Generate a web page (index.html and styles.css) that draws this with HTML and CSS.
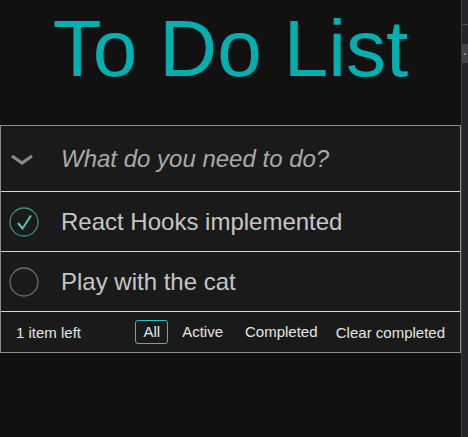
FILE: index.html
```html
<!DOCTYPE html>
<html>
<head>
<meta charset="utf-8">
<link rel="stylesheet" href="styles.css">
</head>
<body>
<div class="page">
  <main class="app">
    <h1 class="title">To Do List</h1>
    <section class="todo-box">
      <div class="row new-row">
        <span class="toggle-all">
          <svg width="24" height="14" viewBox="0 0 24 14"><polyline points="2,3 12,10 22,3" fill="none" stroke="#8a8a8a" stroke-width="3.2"/></svg>
        </span>
        <span class="placeholder">What do you need to do?</span>
      </div>
      <div class="row item">
        <span class="check">
          <svg width="32" height="32" viewBox="0 0 32 32"><circle cx="15" cy="15" r="14" fill="none" stroke="#3d8f80" stroke-width="1.3"/><polyline points="9,16 13.5,21.5 22,8.5" fill="none" stroke="#5cc0ad" stroke-width="2"/></svg>
        </span>
        <span class="label">React Hooks implemented</span>
      </div>
      <div class="row item">
        <span class="check">
          <svg width="32" height="32" viewBox="0 0 32 32"><circle cx="15" cy="15" r="14" fill="none" stroke="#6e6e6e" stroke-width="1.3"/></svg>
        </span>
        <span class="label">Play with the cat</span>
      </div>
      <footer class="footer">
        <span class="count">1 item left</span>
        <nav class="filters">
          <a class="filter selected">All</a>
          <a class="filter">Active</a>
          <a class="filter">Completed</a>
        </nav>
        <a class="clear">Clear completed</a>
      </footer>
    </section>
  </main>
  <aside class="strip">
    <div class="strip-top"></div>
    <div class="strip-handle"><span class="dot"></span></div>
  </aside>
</div>
</body>
</html>
```
FILE: styles.css
```css
html, body {
  margin: 0;
  padding: 0;
  background: #111111;
  height: 100%;
}
body {
  font-family: "Liberation Sans", Arial, sans-serif;
  overflow: hidden;
}
.page {
  display: flex;
  height: 437px;
}
.app {
  width: 461px;
  flex: none;
}
.title {
  margin: 0;
  padding: 9px 0 36px;
  font-size: 80px;
  line-height: 80px;
  font-weight: normal;
  color: #00afaf;
  text-align: center;
}
.todo-box {
  border: 1px solid #8c8c8c;
  background: #1a1a1a;
}
.row {
  display: flex;
  align-items: center;
  border-bottom: 1px solid #d8d8d8;
}
.new-row {
  height: 65px;
}
.item {
  height: 59px;
}
.toggle-all {
  width: 60px;
  flex: none;
  display: flex;
  padding-left: 9px;
  box-sizing: border-box;
  padding-top: 2px;
}
.placeholder {
  font-size: 24px;
  font-style: italic;
  color: #a9a9a9;
}
.check {
  width: 60px;
  flex: none;
  display: flex;
  padding-left: 8px;
  box-sizing: border-box;
  padding-top: 2px;
}
.label {
  font-size: 24px;
  color: #c6c6c6;
}
.footer {
  display: grid;
  grid-template-columns: 1fr auto 1fr;
  align-items: center;
  height: 40px;
  padding: 0 15px;
  font-size: 15px;
  color: #e6e6e6;
}
.count {
  justify-self: start;
}
.filters {
  display: flex;
}
.filter {
  margin: 0 3px;
  padding: 3px 7px;
  line-height: 16px;
  border: 1px solid transparent;
  border-radius: 3px;
}
.filter.selected {
  border-color: #22c4cc;
}
.clear {
  justify-self: end;
}
.strip {
  flex: 1;
  background: #232529;
  border-left: 1px solid #3c3e42;
  display: flex;
  flex-direction: column;
}
.strip-top {
  height: 24px;
  border-bottom: 1px solid #4a4c50;
  margin-bottom: 19px;
}
.strip-handle {
  height: 19px;
  background: #414347;
  display: flex;
  align-items: center;
  justify-content: center;
}
.dot {
  width: 2px;
  height: 2px;
  border-radius: 1px;
  background: #9a9a9a;
}
```
